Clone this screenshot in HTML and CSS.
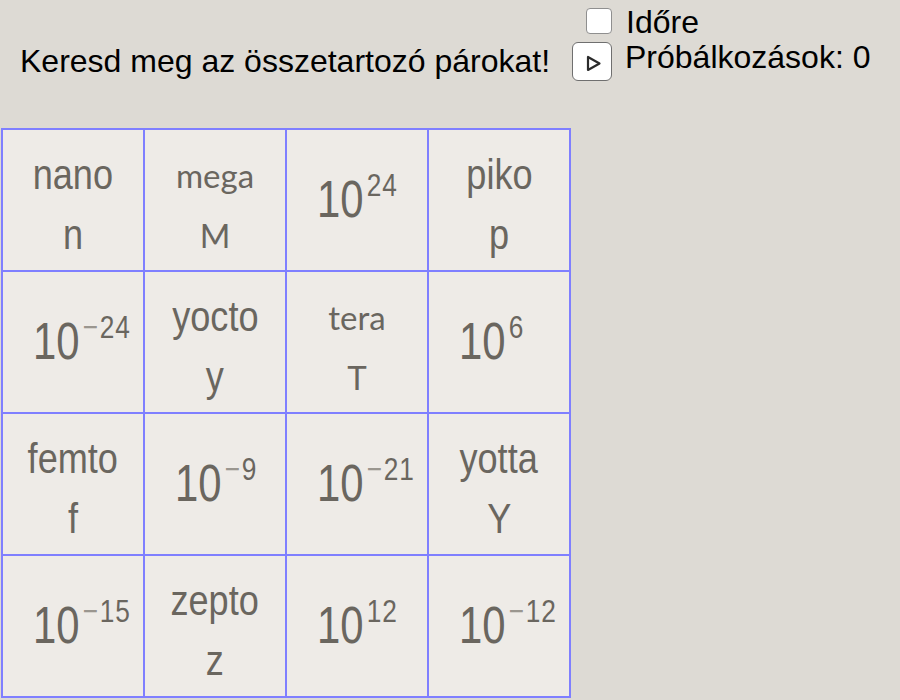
FILE: index.html
```html
<!DOCTYPE HTML>
<html lang="hu">
  <head>
    <title>Mértékegység párosító</title>
    <meta charset="utf-8">
    <link rel="stylesheet" href="styles.css">
  </head>
  <body>

  <div class="top">
    <div class="title">Keresd meg az összetartozó párokat!</div>
    <div class="controls">
      <div class="row timer">
        <span class="check"></span>
        <span class="label">Időre</span>
      </div>
      <div class="row">
        <span class="play">
          <svg width="40" height="39" viewBox="0 0 40 39">
            <polygon points="16,15 16,28 27.5,21.5" fill="none" stroke="#2b2b2b" stroke-width="2.2" stroke-linejoin="round"/>
          </svg>
        </span>
        <span class="label">Próbálkozások: 0</span>
      </div>
    </div>
  </div>

  <div class="board">
    <div class="cell word"><span>nano</span><span>n</span></div>
    <div class="cell word alt"><span>mega</span><span>M</span></div>
    <div class="cell num"><span>10<sup>24</sup></span></div>
    <div class="cell word"><span>piko</span><span>p</span></div>

    <div class="cell num"><span>10<sup><span class="minus">&minus;</span>24</sup></span></div>
    <div class="cell word"><span>yocto</span><span>y</span></div>
    <div class="cell word alt"><span>tera</span><span>T</span></div>
    <div class="cell num"><span>10<sup>6</sup></span></div>

    <div class="cell word"><span>femto</span><span>f</span></div>
    <div class="cell num"><span>10<sup><span class="minus">&minus;</span>9</sup></span></div>
    <div class="cell num"><span>10<sup><span class="minus">&minus;</span>21</sup></span></div>
    <div class="cell word"><span>yotta</span><span>Y</span></div>

    <div class="cell num"><span>10<sup><span class="minus">&minus;</span>15</sup></span></div>
    <div class="cell word"><span>zepto</span><span>z</span></div>
    <div class="cell num"><span>10<sup>12</sup></span></div>
    <div class="cell num"><span>10<sup><span class="minus">&minus;</span>12</sup></span></div>
  </div>

  </body>
</html>
```

FILE: styles.css
```css
html {
  height: 100%;
}
body {
  margin: 0;
  padding: 0;
  background: #dddad4;
  color: #000;
  font-family: "Liberation Sans", Arial, sans-serif;
  font-size: 32px;
  height: 100%;
  overflow: hidden;
}

.top {
  display: flex;
  height: 128px;
}

.title {
  flex: none;
  width: 572px;
  padding: 44px 0 0 20px;
  box-sizing: border-box;
  line-height: 35px;
  white-space: nowrap;
}

.controls {
  padding-top: 5px;
}
.row {
  display: flex;
  align-items: flex-start;
  line-height: 35px;
  height: 35px;
}
.timer {
  padding-left: 14px;
}
.label {
  white-space: nowrap;
}

.check {
  width: 24px;
  height: 24px;
  margin: 3px 14px 0 0;
  background: #fff;
  border: 1px solid #8f8f8f;
  border-radius: 4px;
}

.play {
  width: 38px;
  height: 37px;
  margin: 2px 13px 0 0;
  background: #fff;
  border: 1px solid #6f6f6f;
  border-radius: 6px;
  position: relative;
}
.play svg {
  position: absolute;
  left: -1px;
  top: -1px;
}

.board {
  display: grid;
  grid-template-columns: repeat(4, 140px);
  grid-auto-rows: 140px;
  gap: 2px;
  padding: 2px;
  margin-left: 1px;
  width: max-content;
  background: #7f7fff;
}

.cell {
  background: #eeebe7;
  color: #6a665f;
  box-sizing: border-box;
}

/* the applet draws its labels narrower than plain Arial */
.word {
  display: flex;
  flex-direction: column;
  align-items: center;
  padding-top: 14px;
  font-size: 43px;
  line-height: 60px;
}
.word span {
  display: block;
  transform: scaleX(0.84);
}
.word.alt {
  font-family: Lato, sans-serif;
  font-size: 33px;
  padding-top: 15px;
}
.word.alt span {
  transform: none;
}

.num {
  padding: 39px 0 0 30px;
  font-size: 51px;
  line-height: 60px;
  white-space: nowrap;
}
.num > span {
  display: inline-block;
  transform: scaleX(0.82);
  transform-origin: left center;
}
.num sup {
  font-size: 32px;
  line-height: 1;
  vertical-align: 21px;
  margin-left: 4px;
  letter-spacing: 1px;
}
.minus {
  color: #9a968f;
  margin-right: 1px;
}
```
